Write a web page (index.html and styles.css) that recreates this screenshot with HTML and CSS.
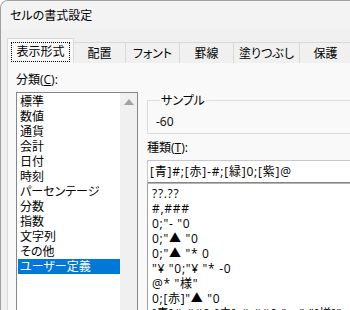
FILE: index.html
```html
<!DOCTYPE html>
<html lang="ja">
<head>
    <meta charset="UTF-8">
    <title>セルの書式設定</title>
    <link rel="stylesheet" href="styles.css">
</head>
<body>
    <div class="window">
        <div class="titlebar">セルの書式設定</div>
        <div class="dialog">
            <div class="tabs">
                <div class="tab active"><span class="focus">表示形式</span></div>
                <div class="tab tab-52">配置</div>
                <div class="tab tab-54">フォント</div>
                <div class="tab tab-54">罫線</div>
                <div class="tab tab-66">塗りつぶし</div>
                <div class="tab tab-52">保護</div>
            </div>
            <div class="panel">
                <div class="category">
                    <div class="label">分類(<u>C</u>):</div>
                    <div class="listbox">
                        <ul class="items">
                            <li>標準</li>
                            <li>数値</li>
                            <li>通貨</li>
                            <li>会計</li>
                            <li>日付</li>
                            <li>時刻</li>
                            <li>パーセンテージ</li>
                            <li>分数</li>
                            <li>指数</li>
                            <li>文字列</li>
                            <li>その他</li>
                            <li class="selected">ユーザー定義</li>
                        </ul>
                        <div class="scrollbar"><span class="arrow-up"></span></div>
                    </div>
                </div>
                <div class="format">
                    <fieldset class="sample">
                        <legend>サンプル</legend>
                        <div class="sample-value">-60</div>
                    </fieldset>
                    <div class="label">種類(<u>T</u>):</div>
                    <div class="input">[青]#;[赤]-#;[緑]0;[紫]@</div>
                    <ul class="format-list">
                        <li>??.??</li>
                        <li>#,###</li>
                        <li>0;"- "0</li>
                        <li>0;"▲ "0</li>
                        <li>0;"▲ "* 0</li>
                        <li>"¥ "0;"¥ "* -0</li>
                        <li>@* "様"</li>
                        <li>0;[赤]"▲ "0</li>
                        <li>[青]#,##0;[赤]-#,##0;"ー";"[様]"</li>
                    </ul>
                </div>
            </div>
        </div>
    </div>
</body>
</html>
```

FILE: styles.css
```css
:root {
    --dialog-bg: #f0f0f0;
    --panel-bg: #f9f9f9;
    --line: #d9d9d9;
    --select: #0078d7;
}

body {
    margin: 0;
    overflow: hidden;
    font-family: "Open Sans", "Noto Sans CJK JP", sans-serif;
    font-size: 12px;
    font-feature-settings: "palt";
    color: #000;
    background: #fff;
}

ul {
    list-style: none;
    margin: 0;
    padding: 0;
}

.window {
    width: 370px;
    height: 330px;
    border-left: 1px solid #a0a0a0;
    border-top: 1px solid #a0a0a0;
    border-top-left-radius: 8px;
    background: var(--dialog-bg);
    overflow: hidden;
}

.titlebar {
    height: 29px;
    line-height: 29px;
    padding-left: 9px;
    background: #f3f3f3;
}

.dialog {
    padding: 9px 0 0 6px;
}

/* tabs */
.tabs {
    display: flex;
    align-items: flex-end;
    height: 24px;
    margin-bottom: -1px;
    position: relative;
    z-index: 1;
}

.tab {
    height: 21px;
    line-height: 21px;
    text-align: center;
    border: 1px solid var(--line);
    border-left: none;
    border-bottom: none;
    box-sizing: border-box;
    background: var(--dialog-bg);
}

.tab.active {
    width: 67px;
    height: 25px;
    border-left: 1px solid var(--line);
    background: var(--panel-bg);
    padding: 3px 3px 0;
}

.focus {
    display: block;
    height: 20px;
    line-height: 18px;
    border: 1px dotted #000;
    box-sizing: border-box;
}

.tab-52 { width: 52px; }
.tab-54 { width: 54px; }
.tab-66 { width: 66px; }

/* panel */
.panel {
    display: flex;
    gap: 9px;
    height: 270px;
    padding: 9px 0 0 8px;
    background: var(--panel-bg);
    border: 1px solid var(--line);
}

.label {
    line-height: 16px;
}

.category .label {
    margin-bottom: 4px;
}

.listbox {
    display: flex;
    width: 122px;
    height: 230px;
    border: 1px solid #828790;
    box-sizing: border-box;
    background: #fff;
}

.items {
    flex: 1;
    padding: 1px 0 0 1px;
}

.items li {
    height: 15px;
    line-height: 15px;
    padding-left: 2px;
}

.items li.selected {
    background: var(--select);
    color: #fff;
}

.scrollbar {
    width: 17px;
    display: flex;
    justify-content: center;
    padding-top: 6px;
    box-sizing: border-box;
    background: #f0f0f0;
}

.arrow-up {
    width: 0;
    height: 0;
    border-left: 5px solid transparent;
    border-right: 5px solid transparent;
    border-bottom: 6px solid #a3a3a3;
}

/* format side */
.format {
    width: 230px;
    padding-top: 21px;
}

.sample {
    margin: 0;
    padding: 0 8px 4px;
    border: 1px solid #dcdcdc;
}

.sample legend {
    padding: 0 1px;
    margin-left: 4px;
    line-height: 15px;
}

.sample-value {
    margin-top: 6px;
    line-height: 15px;
}

.format .label {
    margin-top: 6px;
    margin-bottom: 4px;
}

.input {
    height: 23px;
    line-height: 22px;
    padding-left: 2px;
    border: 1px solid #c8c8c8;
    border-bottom-color: #868686;
    box-sizing: border-box;
    background: #fff;
    white-space: nowrap;
    letter-spacing: 0.8px;
}

.format-list {
    height: 140px;
    padding: 2px 0 0 4px;
    border: 1px solid #a0a0a0;
    border-top-color: #b4b4b4;
    background: #fff;
    letter-spacing: 0.7px;
}

.format-list li {
    height: 15px;
    line-height: 15px;
    white-space: nowrap;
}
```
